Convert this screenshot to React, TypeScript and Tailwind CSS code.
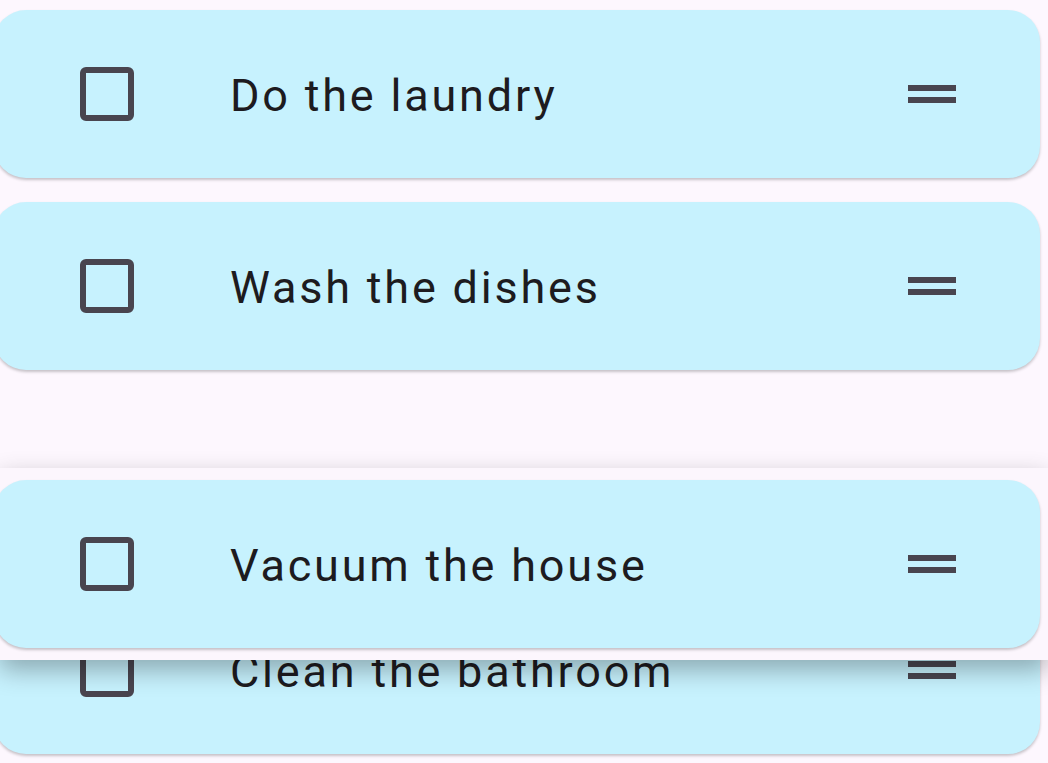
import React from "react";

const todos = ["Do the laundry", "Wash the dishes", "Vacuum the house", "Clean the bathroom"];

const CheckBox: React.FC = () => (
  <div className="w-[54px] h-[54px] shrink-0 rounded-[6px] border-[6px] border-[#49454f]" />
);

const DragHandle: React.FC = () => (
  <div className="w-[48px] flex flex-col gap-[6px]">
    <div className="h-[6px] bg-[#49454f]" />
    <div className="h-[6px] bg-[#49454f]" />
  </div>
);

const TodoCard: React.FC<{ title: string }> = ({ title }) => (
  <div className="h-[168px] ml-[-6px] mr-[8px] bg-[#c7f2fe] rounded-[32px] shadow-[0_2px_3px_rgba(0,0,0,0.22)] flex items-center shrink-0">
    <div className="ml-[86px]">
      <CheckBox />
    </div>
    <span className="ml-[96px] pt-[3px] flex-1 text-[45px] tracking-[2.8px] text-[#1d1b20] leading-none">
      {title}
    </span>
    <div className="mr-[84px]">
      <DragHandle />
    </div>
  </div>
);

export default function App() {
  return (
    <div
      className="relative h-[763px] w-full overflow-hidden bg-[#fdf7fe]"
      style={{ fontFamily: "Roboto, 'Noto Sans', sans-serif" }}
    >
      <div className="flex flex-col gap-6 pt-[10px]">
        <TodoCard title={todos[0]} />
        <TodoCard title={todos[1]} />
        {/* empty drop slot */}
        <div className="h-[168px] shrink-0" />
        <TodoCard title={todos[3]} />
      </div>

      {/* item being dragged */}
      <div className="absolute left-0 right-0 top-[468px] h-[192px] py-3 bg-[#fcf6fd] shadow-[0_10px_24px_rgba(0,0,0,0.3)]">
        <TodoCard title={todos[2]} />
      </div>
    </div>
  );
}
